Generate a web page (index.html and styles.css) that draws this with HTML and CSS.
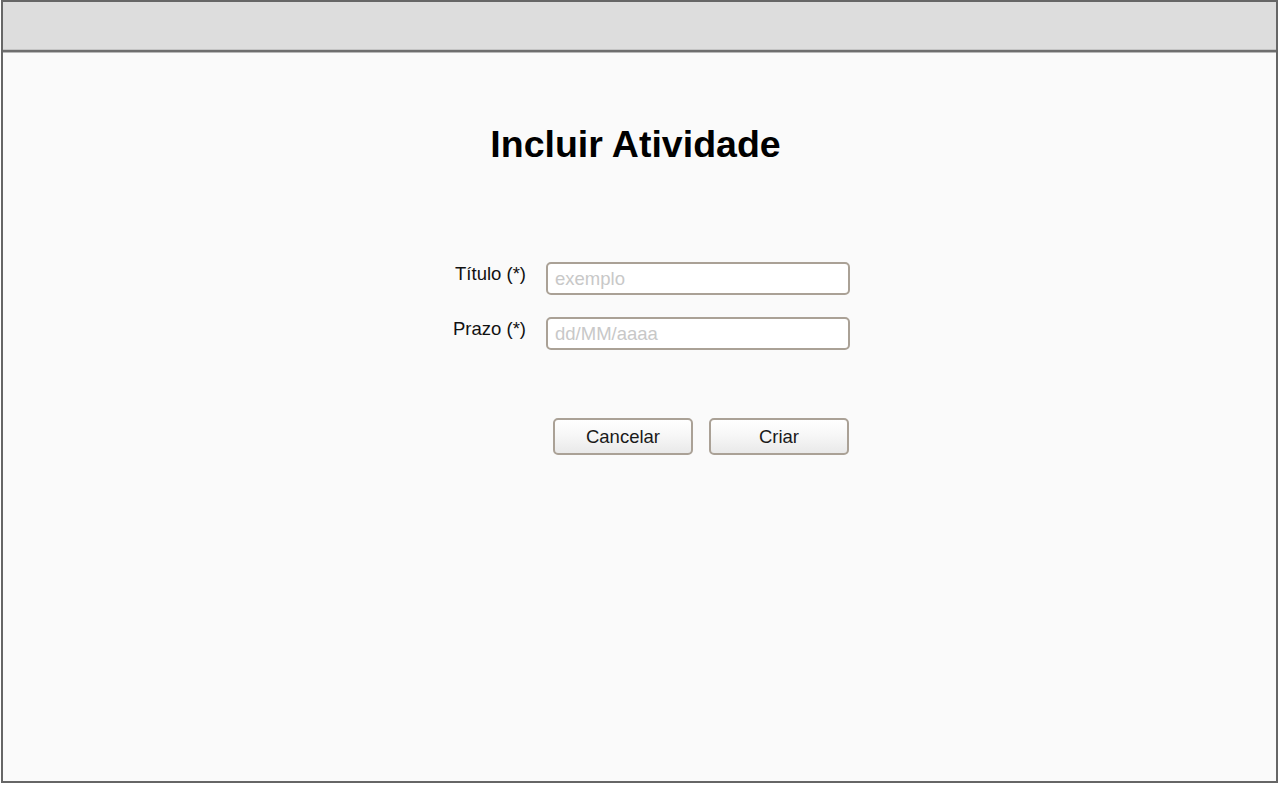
FILE: index.html
```html
<!DOCTYPE html>
<html lang="pt">
<head>
<meta charset="utf-8">
<title>Incluir Atividade</title>
<link rel="stylesheet" href="styles.css">
</head>
<body>
<div class="frame">
  <div class="topbar"></div>
  <main class="content">
    <h1 class="title">Incluir Atividade</h1>
    <form class="form">
      <label class="label" for="titulo">Título (*)</label>
      <input class="field" id="titulo" type="text" placeholder="exemplo">
      <label class="label" for="prazo">Prazo (*)</label>
      <input class="field" id="prazo" type="text" placeholder="dd/MM/aaaa">
      <div class="actions">
        <button type="button" class="btn">Cancelar</button>
        <button type="button" class="btn">Criar</button>
      </div>
    </form>
  </main>
</div>
</body>
</html>
```

FILE: styles.css
```css
html, body {
  margin: 0;
  padding: 0;
  background: #ffffff;
}

body {
  font-family: "Liberation Sans", Arial, sans-serif;
}

.frame {
  box-sizing: border-box;
  width: 1277px;
  height: 783px;
  margin-left: 1px;
  border: 2px solid #666666;
  background: #fafafa;
  display: flex;
  flex-direction: column;
}

.topbar {
  height: 47px;
  background: #dddddd;
  border-bottom: 1px solid #c4c4c4;
  box-shadow: 0 2px 0 #6e6e6e, 0 3px 0 #b8b8b8;
  margin-bottom: 3px;
}

.content {
  flex: 1;
  display: flex;
  flex-direction: column;
}

.title {
  margin: 70px 8px 0 0;
  font-size: 37.5px;
  font-weight: bold;
  line-height: 42px;
  color: #000000;
  text-align: center;
}

.form {
  margin: 97px 0 0 436px;
  display: grid;
  grid-template-columns: 87px 304px;
  column-gap: 20px;
  row-gap: 22px;
  align-items: start;
}

.label {
  font-size: 18.5px;
  line-height: 22px;
  color: #111111;
  text-align: right;
  padding-top: 1px;
}

.field {
  box-sizing: border-box;
  width: 304px;
  height: 33px;
  margin: 0;
  padding: 0 7px;
  border: 2px solid #aaa196;
  border-radius: 5px;
  background: #ffffff;
  font-family: "Liberation Sans", Arial, sans-serif;
  font-size: 18.5px;
  color: #222222;
  outline: none;
}

.field::placeholder {
  color: #c8c8c8;
}

.actions {
  grid-column: 2;
  display: flex;
  justify-content: flex-end;
  gap: 16px;
  margin: 46px 1px 0 0;
}

.btn {
  box-sizing: border-box;
  width: 140px;
  height: 37px;
  margin: 0;
  padding: 0;
  border: 2px solid #aaa196;
  border-radius: 5px;
  background: linear-gradient(#ffffff 0%, #f6f6f6 50%, #e9e9e9 100%);
  font-family: "Liberation Sans", Arial, sans-serif;
  font-size: 18.5px;
  color: #1a1a1a;
  cursor: pointer;
}
```
